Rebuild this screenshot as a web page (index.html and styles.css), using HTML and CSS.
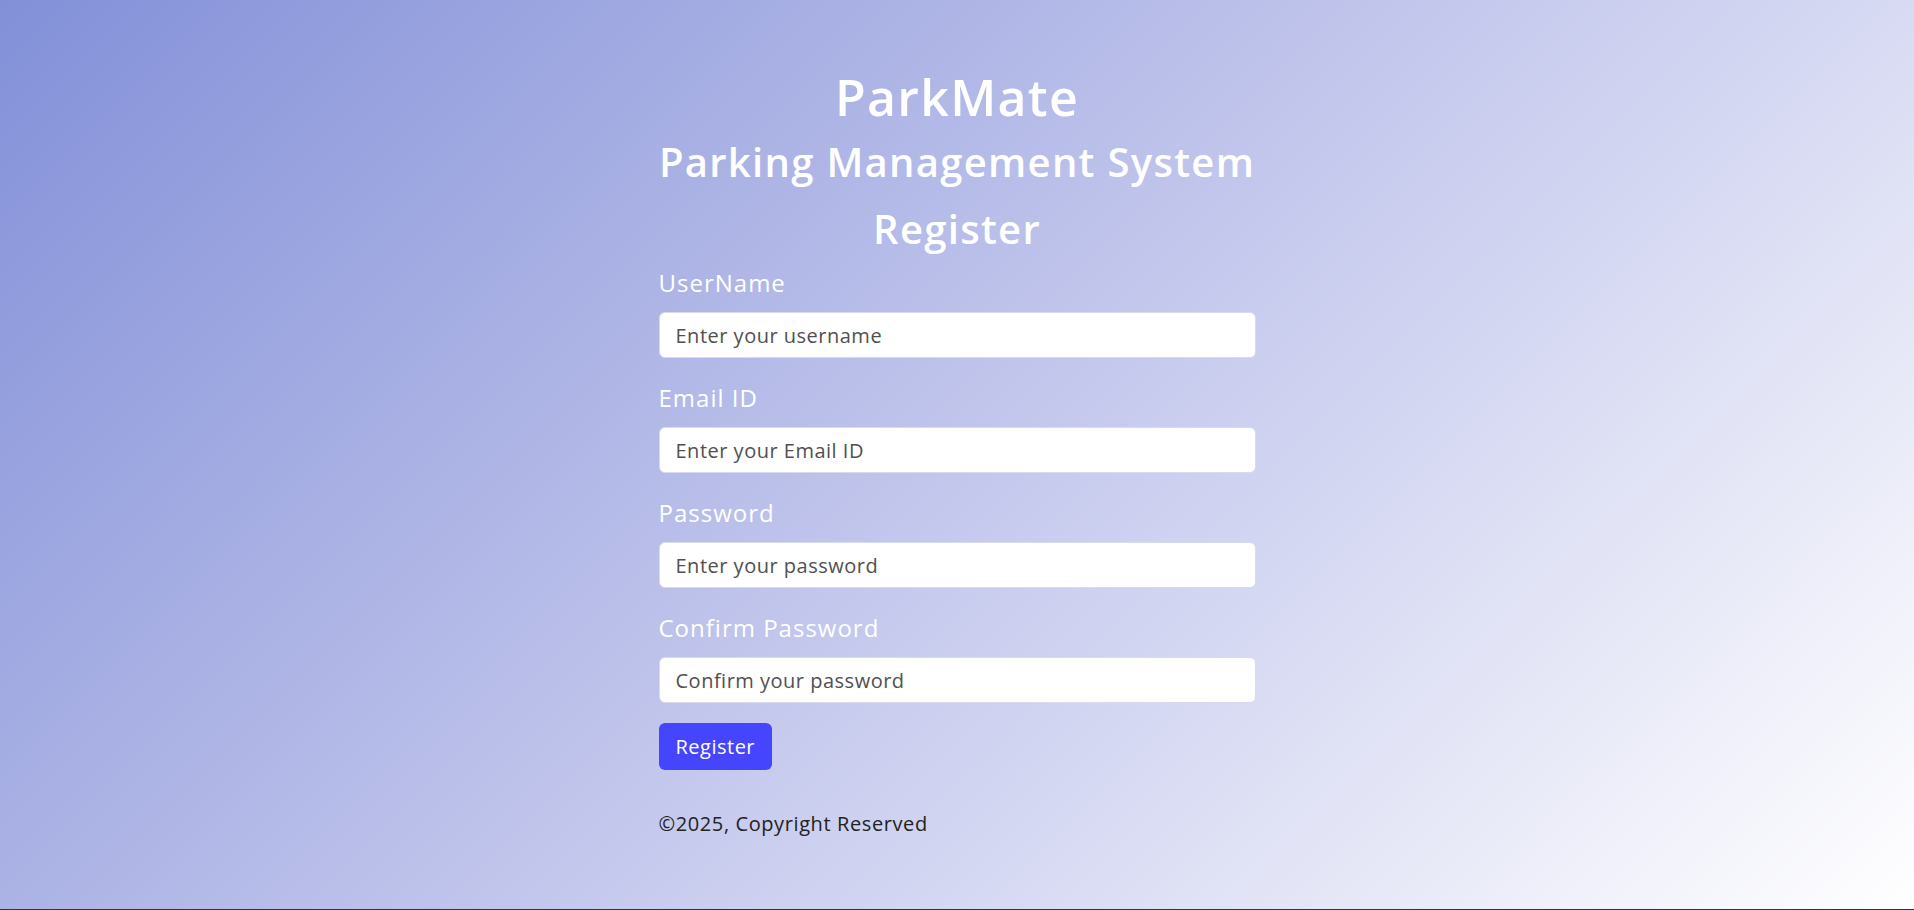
FILE: index.html
```html
<!DOCTYPE html>
<html lang="en">
<head>
<meta charset="utf-8">
<title>ParkMate - Register</title>
<link rel="stylesheet" href="styles.css">
</head>
<body>
<div class="page">
  <main class="card">
    <h1 class="brand">ParkMate</h1>
    <h2 class="subtitle">Parking Management System</h2>
    <h2 class="form-title">Register</h2>
    <form class="form">
      <label class="label" for="u">UserName</label>
      <input class="input" id="u" type="text" placeholder="Enter your username">
      <label class="label" for="e">Email ID</label>
      <input class="input" id="e" type="text" placeholder="Enter your Email ID">
      <label class="label" for="p">Password</label>
      <input class="input" id="p" type="password" placeholder="Enter your password">
      <label class="label" for="c">Confirm Password</label>
      <input class="input" id="c" type="password" placeholder="Confirm your password">
      <button class="btn" type="button">Register</button>
    </form>
    <p class="footer">©2025, Copyright Reserved</p>
  </main>
</div>
</body>
</html>
```

FILE: styles.css
```css
html {
  margin: 0;
  padding: 0;
  background: #30353a;
  height: 910px;
}
body {
  margin: 0;
  padding: 0;
  font-family: "Open Sans", "Liberation Sans", sans-serif;
  height: 909px;
  overflow: hidden;
  background: linear-gradient(135deg, #8290d8 0%, #c2c6ec 50%, #ffffff 100%);
}
.page {
  display: flex;
  justify-content: center;
  padding-top: 69px;
}
.card {
  width: 597px;
  display: flex;
  flex-direction: column;
}
.brand {
  margin: 0;
  font-size: 50px;
  line-height: 56px;
  font-weight: 600;
  letter-spacing: 1.3px;
  color: #ffffff;
  text-align: center;
}
.subtitle {
  margin: 12px 0 0;
  font-size: 40px;
  line-height: 50px;
  font-weight: 600;
  letter-spacing: 1.3px;
  color: #ffffff;
  text-align: center;
  white-space: nowrap;
}
.form-title {
  margin: 17px 0 0;
  font-size: 40px;
  line-height: 50px;
  font-weight: 600;
  letter-spacing: 1.3px;
  color: #ffffff;
  text-align: center;
}
.form {
  display: flex;
  flex-direction: column;
  align-items: flex-start;
  margin-top: 14px;
}
.label {
  font-size: 24px;
  line-height: 30px;
  letter-spacing: 1px;
  color: #ffffff;
  margin-bottom: 14px;
}
.input {
  box-sizing: border-box;
  width: 100%;
  height: 46px;
  border: 1px solid #d9d9ef;
  border-radius: 6px;
  background: #ffffff;
  padding: 0 16px;
  font-family: inherit;
  font-size: 20px;
  letter-spacing: 0.5px;
  color: #333;
  margin: 0 0 25px;
  outline: none;
}
.input::placeholder {
  color: #505050;
}
.btn {
  margin-top: -5px;
  height: 47px;
  padding: 0 17px;
  border: none;
  border-radius: 6px;
  background: #4545fd;
  color: #ffffff;
  font-family: inherit;
  font-size: 20px;
  letter-spacing: 0.5px;
}
.footer {
  margin: 41px 0 0;
  font-size: 20px;
  line-height: 26px;
  letter-spacing: 0.6px;
  color: #222222;
}
```
